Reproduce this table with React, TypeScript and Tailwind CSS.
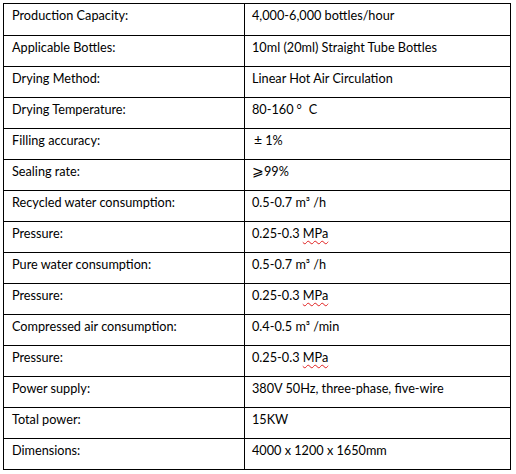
import React from "react";

type Row = { label: string; value: React.ReactNode };

const MPa = () => (
  <span className="underline decoration-wavy decoration-[#e02020] decoration-1 underline-offset-2">MPa</span>
);

const rows: Row[] = [
  { label: "Production Capacity:", value: "4,000-6,000 bottles/hour" },
  { label: "Applicable Bottles:", value: "10ml (20ml) Straight Tube Bottles" },
  { label: "Drying Method:", value: "Linear Hot Air Circulation" },
  {
    label: "Drying Temperature:",
    value: (
      <>
        80-160<span className="ml-[3px] mr-[7px]">°</span>C
      </>
    ),
  },
  {
    label: "Filling accuracy:",
    value: (
      <>
        <span className="ml-[2px] mr-[3px] text-[14px]">±</span>1%
      </>
    ),
  },
  {
    label: "Sealing rate:",
    value: (
      <>
        <span className="text-[14px]">⩾</span>99%
      </>
    ),
  },
  { label: "Recycled water consumption:", value: "0.5-0.7 m³ /h" },
  { label: "Pressure:", value: <>0.25-0.3 <MPa /></> },
  { label: "Pure water consumption:", value: "0.5-0.7 m³ /h" },
  { label: "Pressure:", value: <>0.25-0.3 <MPa /></> },
  { label: "Compressed air consumption:", value: "0.4-0.5 m³ /min" },
  { label: "Pressure:", value: <>0.25-0.3 <MPa /></> },
  { label: "Power supply:", value: "380V 50Hz, three-phase, five-wire" },
  { label: "Total power:", value: "15KW" },
  { label: "Dimensions:", value: "4000 x 1200 x 1650mm" },
];

export default function App() {
  return (
    <div className="w-[516px] h-[474px] bg-white pt-[3px] pl-[3px] font-['Lato','Liberation_Sans',sans-serif] text-[12.7px] text-black">
      {/* spec table */}
      <div className="w-[508px] border border-black">
        {rows.map((r, i) => (
          <div key={i} className={`grid grid-cols-[241px_1fr] h-[31px] ${i > 0 ? "border-t border-black" : ""}`}>
            <div className="pl-[8px] pt-[3px] leading-[16px] border-r border-black">{r.label}</div>
            <div className="pl-[7px] pt-[3px] leading-[16px]">{r.value}</div>
          </div>
        ))}
      </div>
    </div>
  );
}
